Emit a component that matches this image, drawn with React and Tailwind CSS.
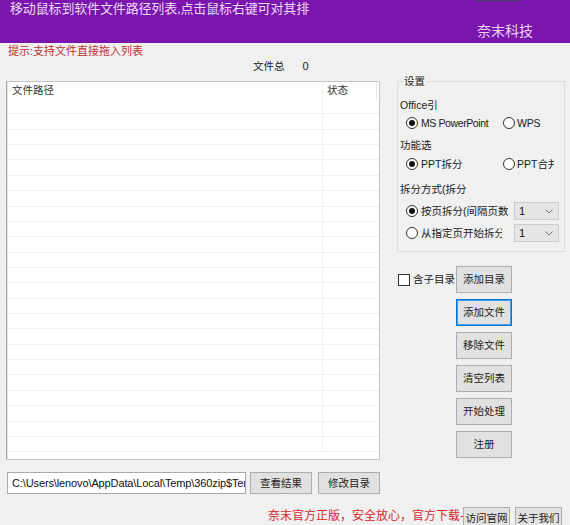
import React from "react";

function Radio({ checked }) {
  return (
    <span className="w-[12px] h-[12px] shrink-0 rounded-full border border-[#333] bg-white flex items-center justify-center">
      {checked && <span className="w-[6px] h-[6px] rounded-full bg-[#111]" />}
    </span>
  );
}

function Btn({ children, focused, className = "" }) {
  return (
    <div
      className={
        "flex items-center justify-center bg-[#e1e1e1] border text-[10.5px] text-[#222] leading-none " +
        (focused
          ? "border-[#0078d7] shadow-[inset_0_0_0_1px_#4a9be0] "
          : "border-[#adadad] ") +
        className
      }
    >
      {children}
    </div>
  );
}

function Select() {
  return (
    <div className="w-[45px] h-[18px] bg-[#e5e5e5] border border-[#cccccc] flex items-center justify-between pl-[4px] pr-[4px]">
      <span className="text-[11px] leading-none text-[#111]">1</span>
      <svg width="8" height="5" viewBox="0 0 8 5" className="mr-[1px]">
        <path d="M0.5 0.5 L4 4 L7.5 0.5" fill="none" stroke="#777" strokeWidth="1" />
      </svg>
    </div>
  );
}

export default function App() {
  const rows = Array.from({ length: 23 });
  return (
    <div className="w-[570px] h-[525px] overflow-hidden bg-[#f0f0f0] font-['Liberation_Sans','Noto_Sans_CJK_SC',sans-serif] text-[#1a1a1a]">
      <header className="h-[43px] bg-[#7a15ae] relative flex flex-col">
        <div className="absolute left-[477px] top-0 w-[44px] h-px bg-[#3c4a5c]" />
        <div className="pl-[10px] pt-[1px] text-[13px] leading-[16px] text-[#eedcf3] whitespace-nowrap tracking-[-0.15px]">
          移动鼠标到软件文件路径列表,点击鼠标右键可对其排
        </div>
        <div className="self-end pr-[37px] mt-[6px] text-[14px] leading-[16px] text-[#ecd3f0]">
          奈末科技
        </div>
      </header>

      <div className="flex">
        {/* left column */}
        <div className="ml-[6px] w-[374px] flex flex-col">
          <div className="h-[17px] pl-[2px] pt-[1px] text-[11px] leading-[15px] text-[#c03030] whitespace-nowrap">
            提示:支持文件直接拖入列表
          </div>
          <div className="h-[21px] pl-[247px] flex text-[10.5px] leading-[12px] text-[#222]">
            <span>文件总</span>
            <span className="ml-[18px] font-['Liberation_Sans',sans-serif] text-[11px]">0</span>
          </div>
          <div className="h-[379px] bg-white border border-[#c4c4c4] border-l-[#a8a8a8] shadow-[inset_1px_0_0_0_#e6e6e6] flex flex-col overflow-hidden">
            <div className="h-[17px] shrink-0 flex">
              <div className="w-[315px] pl-[5px] text-[10.5px] leading-[17px] text-[#333]">文件路径</div>
              <div className="w-[54px] border-l border-[#f2f2f2] pl-[4px] text-[10.5px] leading-[17px] text-[#333]">
                状态
              </div>
              <div className="flex-1 border-l border-[#e8e8e8]" />
            </div>
            {rows.map((_, i) => (
              <div key={i} className="h-[15.36px] shrink-0 flex border-b border-[#f0f0f0]">
                <div className="w-[315px]" />
                <div className="w-[54px] border-l border-[#f0f0f0]" />
              </div>
            ))}
          </div>
          <div className="mt-[12px] h-[22px] flex">
            <div className="ml-[1px] w-[239px] h-[22px] bg-white border border-[#a9a9a9] pl-[4px] overflow-hidden whitespace-nowrap text-[11px] tracking-[-0.12px] leading-[20px] text-[#111]">
              C:\Users\lenovo\AppData\Local\Temp\360zip$Temp\360$0\奈末PPT批量拆分合并助手
            </div>
            <Btn className="ml-[4px] w-[62px] h-[22px]">查看结果</Btn>
            <Btn className="ml-[6px] w-[62px] h-[22px]">修改目录</Btn>
          </div>
        </div>

        {/* right column */}
        <div className="ml-[17px] w-[168px] mt-[38px] flex flex-col">
          <div className="relative h-[171px] border border-[#dcdcdc] flex flex-col text-[10.5px] text-[#1a1a1a]">
            <div className="absolute -top-[8px] left-[5px] bg-[#f0f0f0] px-[1px] text-[10.5px] leading-[14px]">设置</div>
            <div className="mt-[15px] h-[16px] pl-[2px] leading-[16px]">
              Office引
            </div>
            <div className="mt-[2px] h-[16px] pl-[8px] flex items-center">
              <div className="w-[97px] flex items-center">
                <Radio checked />
                <span className="ml-[3px] text-[10.5px] tracking-[-0.4px] leading-none">MS PowerPoint</span>
              </div>
              <div className="flex items-center">
                <Radio />
                <span className="ml-[2px] text-[10.5px] leading-none tracking-[-0.2px]">WPS</span>
              </div>
            </div>
            <div className="mt-[6px] h-[16px] pl-[2px] leading-[16px]">功能选</div>
            <div className="mt-[3px] h-[16px] pl-[8px] flex items-center">
              <div className="w-[97px] flex items-center">
                <Radio checked />
                <span className="ml-[3px] leading-none whitespace-nowrap">PPT拆分</span>
              </div>
              <div className="w-[51px] overflow-hidden flex items-center">
                <Radio />
                <span className="ml-[2px] leading-none whitespace-nowrap">PPT合并</span>
              </div>
            </div>
            <div className="mt-[9px] h-[16px] pl-[2px] leading-[16px] whitespace-nowrap">拆分方式(拆分</div>
            <div className="mt-[5px] h-[18px] pl-[8px] flex items-center">
              <div className="w-[102px] overflow-hidden flex items-center">
                <Radio checked />
                <span className="ml-[3px] leading-none whitespace-nowrap">按页拆分(间隔页数)</span>
              </div>
              <div className="ml-[6px]">
                <Select />
              </div>
            </div>
            <div className="mt-[4px] h-[18px] pl-[8px] flex items-center">
              <div className="w-[96px] overflow-hidden flex items-center">
                <Radio />
                <span className="ml-[3px] leading-none whitespace-nowrap">从指定页开始拆分</span>
              </div>
              <div className="ml-[12px]">
                <Select />
              </div>
            </div>
          </div>

          <div className="mt-[14px] flex items-center">
            <div className="w-[59px] flex items-center overflow-hidden">
              <span className="ml-[1px] w-[12px] h-[12px] shrink-0 border border-[#333] bg-white" />
              <span className="ml-[3px] text-[10.5px] leading-none whitespace-nowrap">含子目录</span>
            </div>
            <Btn className="w-[56px] h-[27px]">添加目录</Btn>
          </div>
          <div className="mt-[6px] pl-[59px] flex flex-col gap-[6px]">
            <Btn focused className="w-[56px] h-[27px]">添加文件</Btn>
            <Btn className="w-[56px] h-[27px]">移除文件</Btn>
            <Btn className="w-[56px] h-[27px]">清空列表</Btn>
            <Btn className="w-[56px] h-[27px]">开始处理</Btn>
            <Btn className="w-[56px] h-[27px]">注册</Btn>
          </div>
        </div>
      </div>

      <div className="flex pl-[268px] pt-[13px]">
        <div className="w-[195px] text-[12px] leading-[18px] text-[#d42a2a] whitespace-nowrap">
          奈末官方正版，安全放心，官方下载-
        </div>
        <Btn className="w-[47px] h-[22px]">访问官网</Btn>
        <Btn className="ml-[5px] w-[47px] h-[22px]">关于我们</Btn>
      </div>
    </div>
  );
}
